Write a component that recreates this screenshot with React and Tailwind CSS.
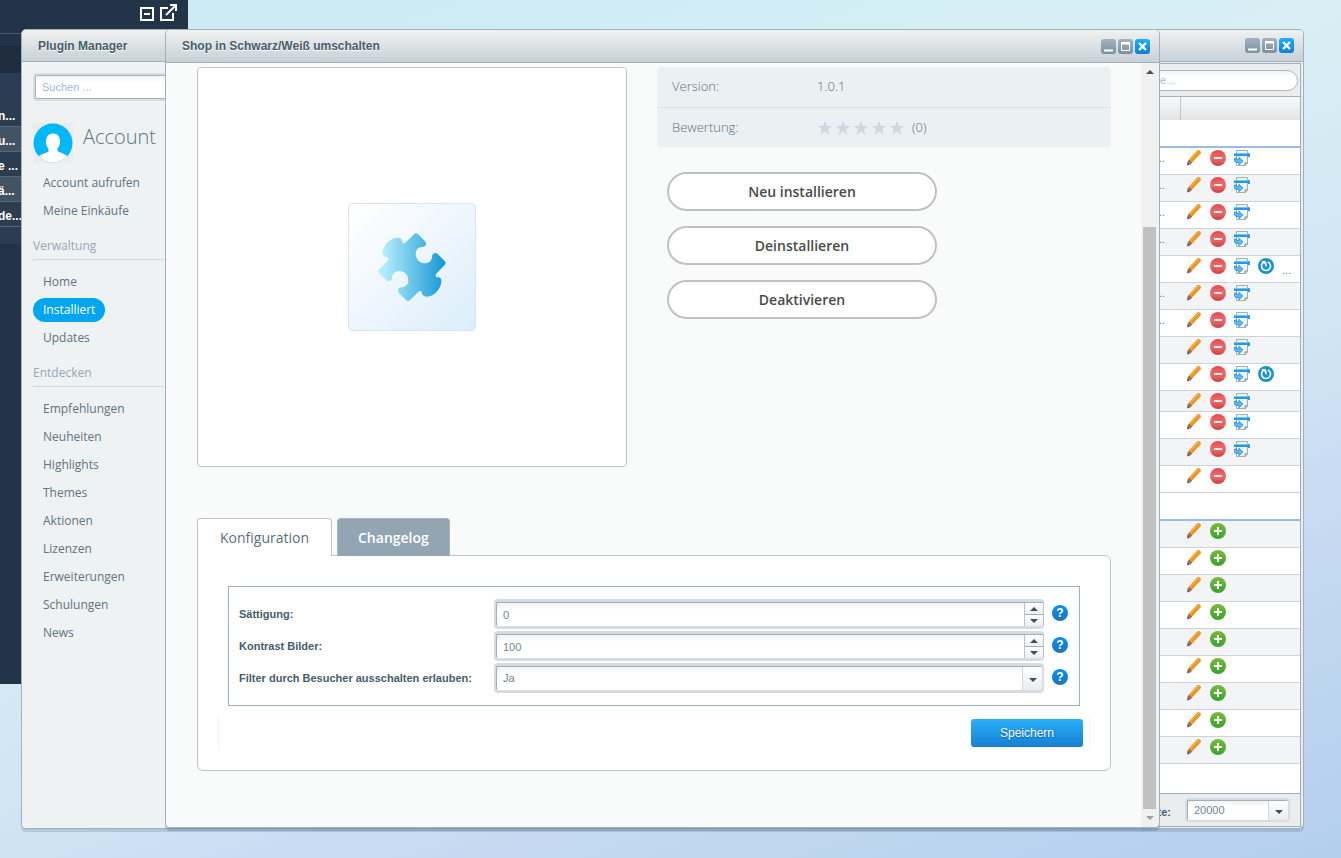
import { useState } from "react";
import clsx from "clsx";

const ACCOUNT_LINKS = ["Account aufrufen", "Meine Einkäufe"];
const MANAGE_LINKS = ["Home", "Installiert", "Updates"];
const DISCOVER_LINKS = [
  "Empfehlungen",
  "Neuheiten",
  "Highlights",
  "Themes",
  "Aktionen",
  "Lizenzen",
  "Erweiterungen",
  "Schulungen",
  "News",
];

const INSTALLED = [
  { dots: true, actions: ["edit", "remove", "reinstall"] },
  { dots: true, actions: ["edit", "remove", "reinstall"] },
  { dots: true, actions: ["edit", "remove", "reinstall"] },
  { dots: true, actions: ["edit", "remove", "reinstall"] },
  { actions: ["edit", "remove", "reinstall", "update"], more: true },
  { dots: true, actions: ["edit", "remove", "reinstall"] },
  { dots: true, actions: ["edit", "remove", "reinstall"] },
  { actions: ["edit", "remove", "reinstall"] },
  { actions: ["edit", "remove", "reinstall", "update"] },
  { actions: ["edit", "remove", "reinstall"], short: true },
  { actions: ["edit", "remove", "reinstall"] },
  { actions: ["edit", "remove", "reinstall"] },
  { actions: ["edit", "remove"] },
];

const AVAILABLE = Array.from({ length: 9 }, () => ({ actions: ["edit", "install"] }));

const TREE_ROWS = ["n...", "u...", "e ...", "ä...", "de..."];

/* ---------- icons ---------- */

function PencilIcon() {
  return (
    <svg width="16" height="16" viewBox="0 0 16 16">
      <path d="M1 15.6 1.6 11.4 4.8 14.2Z" fill="#6d5a55" />
      <path d="M1.6 11.4 3.2 9.4 6.2 12.2 4.8 14.2Z" fill="#a06a48" />
      <path d="M2.8 9.4 11.4.3Q12.6-.4 13.8.6T15 3L6.2 12.6Z" fill="#e8962a" />
      <path d="M4 9.5 12.500 1" stroke="#f3b04a" strokeWidth="1.200" />
    </svg>
  );
}

function RemoveIcon() {
  return (
    <svg width="16" height="16" viewBox="0 0 16 16">
      <defs>
        <linearGradient id="red" x1="0" y1="0" x2="0" y2="1">
          <stop offset="0" stopColor="#e5484b" />
          <stop offset=".5" stopColor="#ea6e70" />
          <stop offset="1" stopColor="#cf4040" />
        </linearGradient>
      </defs>
      <circle cx="8" cy="8" r="8" fill="url(#red)" />
      <rect x="4" y="7" width="8" height="2" fill="#fdeaea" />
    </svg>
  );
}

function InstallIcon() {
  return (
    <svg width="16" height="16" viewBox="0 0 16 16">
      <defs>
        <linearGradient id="green" x1="0" y1="0" x2="0" y2="1">
          <stop offset="0" stopColor="#7db93a" />
          <stop offset="1" stopColor="#35a42f" />
        </linearGradient>
      </defs>
      <circle cx="8" cy="8" r="8" fill="url(#green)" />
      <path d="M8 4v8M4 8h8" stroke="#fff" strokeWidth="2" />
    </svg>
  );
}

function ReinstallIcon() {
  return (
    <svg width="16" height="16" viewBox="0 0 16 16">
      <path d="M2.500.5h11v13l-2 2h-9Z" fill="#eef6f5" stroke="#9fb2b0" />
      <path d="M11 15.500v-2.500h2.500" fill="#fff" stroke="#6f8886" />
      <path d="M0 3h15l1 1v3h-2V6H0Z" fill="#2799ea" />
      <path d="M0 3.500h14" stroke="#6cc6fb" />
      <path
        d="M.5 8h2.200v1.600h2.200V7.200L9 11l-4.100 3.800v-2.400H2.500Q.5 12.400.5 10.500Z"
        fill="#62bdf5"
        stroke="#1a7fcd"
        strokeWidth=".7"
      />
    </svg>
  );
}

function UpdateIcon() {
  return (
    <svg width="16" height="16" viewBox="0 0 16 16">
      <circle cx="8" cy="8" r="8" fill="#1c93d1" />
      <path d="M10 4A4.500 4.500 0 1 1 5.200 4.500" fill="none" stroke="#fff" strokeWidth="1.600" />
      <path d="M3.500 3h4.200v4.200Z" fill="#fff" />
      <path d="M8 4.500v4" stroke="#fff" strokeWidth="1.400" />
    </svg>
  );
}

const ACTIONS = {
  edit: { label: "Bearbeiten", Icon: PencilIcon },
  remove: { label: "Deinstallieren", Icon: RemoveIcon },
  install: { label: "Installieren", Icon: InstallIcon },
  reinstall: { label: "Neu installieren", Icon: ReinstallIcon },
  update: { label: "Aktualisieren", Icon: UpdateIcon },
};

function PuzzleIcon() {
  return (
    <svg width="72" height="72" viewBox="138 122 216 216">
      <defs>
        <linearGradient id="puzzle" x1="0" y1="0" x2="1" y2="0">
          <stop offset="0.08" stopColor="#b4ecfd" />
          <stop offset="1" stopColor="#1397d3" />
        </linearGradient>
      </defs>
      <path
        fill="url(#puzzle)"
        d="M252 132Q258 126 264 132L285 153Q292 162 284 168Q280 170 275 170C263 171 257 180 257 191C258 207 269 219 284 219C297 219 306 210 306 199Q306 194 309 191Q316 185 323 191L344 212Q350 218 344 224L319 250Q314 257 320 261H325Q334 262 334 272C334 294 313 319 291 319Q276 319 275 306Q273 300 267 303L240 329Q234 335 228 329L207 308Q201 300 207 293Q211 291 217 291C229 290 235 281 235 270C235 254 223 242 208 242C195 242 186 251 186 262Q186 267 183 270Q176 276 169 270L148 249Q142 243 148 237L173 211Q178 204 172 200H167Q158 199 158 189C158 167 179 142 202 142Q216 142 217 155Q219 162 225 158Z"
      />
    </svg>
  );
}

function Avatar() {
  return (
    <svg width="40" height="40" viewBox="0 0 40 40" className="shrink-0 bg-[#e9edee]">
      <defs>
        <clipPath id="face">
          <circle cx="20" cy="20" r="19.500" />
        </clipPath>
      </defs>
      <g clipPath="url(#face)">
        <rect width="40" height="40" fill="#00b7fa" />
        <path
          fill="#fff"
          d="M20 10.500c5 0 7 3.500 7 8 0 3-1 5-2.500 7v2.500c1 1 8 2.500 11 6.500V40H4v-5c3-4 10.500-5.500 11.500-6.500V26C14 24 13 22 13 19c0-4.500 2-8.500 7-8.500Z"
        />
      </g>
    </svg>
  );
}

function Star() {
  return (
    <svg width="16" height="16" viewBox="0 0 16 16">
      <path fill="#cbd9e2" d="M8 .5 9.900 6H15.500L11 9.300 12.700 15 8 11.600 3.300 15 5 9.300.5 6H6.100Z" />
    </svg>
  );
}

function Triangle({ up, light }) {
  return (
    <svg width="8" height="4" viewBox="0 0 8 4" className={light ? "text-[#a0a0a0]" : "text-[#444c54]"}>
      <path d={up ? "M0 4 4 0 8 4Z" : "M0 0H8L4 4Z"} fill="currentColor" />
    </svg>
  );
}

/* ---------- window parts ---------- */

function WindowButtons() {
  const grey = "flex size-[15px] items-center justify-center rounded-[3px] bg-linear-to-b from-[#a3b3bf] to-[#7b909f]";
  return (
    <div className="flex gap-0.5">
      <button aria-label="Minimieren" className={grey}>
        <svg width="15" height="15" viewBox="0 0 15 15">
          <path d="M3 11.500h9" stroke="#fff" strokeWidth="2" />
        </svg>
      </button>
      <button aria-label="Maximieren" className={grey}>
        <svg width="15" height="15" viewBox="0 0 15 15">
          <path d="M3.500 3.500h8v8h-8Z" fill="none" stroke="#fff" />
          <path d="M3 4.500h9" stroke="#fff" strokeWidth="2" />
        </svg>
      </button>
      <button
        aria-label="Schließen"
        className="flex size-[15px] items-center justify-center rounded-[3px] bg-linear-to-b from-[#1fb0fb] to-[#0b7fd6]"
      >
        <svg width="15" height="15" viewBox="0 0 15 15">
          <path d="M4 4l7 7M11 4l-7 7" stroke="#fff" strokeWidth="2.400" />
        </svg>
      </button>
    </div>
  );
}

function WindowHeader({ title, tall }) {
  return (
    <header
      className={clsx(
        "flex shrink-0 items-center justify-between border-b border-[#a0b1be] bg-linear-to-b from-[#f0f1f1] to-[#c8d1d7] pr-[9px] pl-4",
        tall ? "h-[33px]" : "h-8"
      )}
    >
      <h2 className="text-xs font-bold text-[#475c6a] [text-shadow:0_1px_0_#fff]">{title}</h2>
      <WindowButtons />
    </header>
  );
}

function NavLinks({ items, active }) {
  return (
    <ul className="flex flex-col items-start gap-1">
      {items.map((item) => (
        <li key={item} className="flex">
          <a
            href="#"
            className={clsx(
              "rounded-full px-2.5 text-xs leading-6",
              item === active ? "bg-[#00a5f2] font-medium text-white" : "text-[#61747f]"
            )}
          >
            {item}
          </a>
        </li>
      ))}
    </ul>
  );
}

function Sidebar() {
  return (
    <aside className="w-[210px] shrink-0 bg-[#eef2f3] px-[11px] pt-[11px] font-['Open_Sans',sans-serif]">
      <div className="rounded-sm bg-[#d8dde2] p-0.5">
        <input
          type="search"
          aria-label="Suchen"
          placeholder="Suchen ..."
          className="block h-6 w-full rounded-xs border border-[#a5b1bb] bg-linear-to-b from-[#f1f2f3] via-white via-30% to-white px-1.5 font-['Liberation_Sans',Arial,sans-serif] text-[11px] outline-none placeholder:text-[#a3b9c6]"
        />
      </div>
      <div className="mt-[22px] mb-2 flex gap-2.5">
        <Avatar />
        <h3 className="text-xl leading-7 font-light text-[#61747f]">Account</h3>
      </div>
      <NavLinks items={ACCOUNT_LINKS} />
      <h4 className="mt-[13px] mb-2.5 border-b border-[#d2dae0] pb-[3px] text-xs leading-5 text-[#97a7b3]">Verwaltung</h4>
      <NavLinks items={MANAGE_LINKS} active="Installiert" />
      <h4 className="mt-[13px] mb-2.5 border-b border-[#d2dae0] pb-[3px] text-xs leading-5 text-[#97a7b3]">Entdecken</h4>
      <NavLinks items={DISCOVER_LINKS} />
    </aside>
  );
}

function PluginRow({ row, grey }) {
  const cell = clsx(
    "border-b border-[#cbd4dc] pt-0.5 align-top",
    row.short ? "h-[21px]" : "h-[27px]",
    grey ? "bg-[#f3f4f6]" : "bg-white"
  );
  return (
    <tr>
      <td className={clsx(cell, "pr-[15px] text-right leading-4 text-[#4b86bb]")}>{row.dots && "..."}</td>
      <td className={clsx(cell, "pl-1.5")}>
        <div className="flex h-4 gap-2">
          {row.actions.map((name) => {
            const { label, Icon } = ACTIONS[name];
            return (
              <button key={name} aria-label={label} className="size-4">
                <Icon />
              </button>
            );
          })}
          {row.more && <span className="pt-1 text-[#61747f]">...</span>}
        </div>
      </td>
    </tr>
  );
}

function GroupRow() {
  return (
    <tr>
      <td colSpan={2} className="h-7 border-b-2 border-[#99bbe8] bg-white" />
    </tr>
  );
}

function PluginGrid() {
  return (
    <section className="mt-px mr-0.5 mb-px flex min-w-0 flex-1 flex-col border border-[#a0b1be] bg-[#ebecee]">
      <div className="flex h-8 shrink-0 items-center justify-end pr-0.5">
        <input
          type="search"
          aria-label="Plugins durchsuchen"
          placeholder="Suche..."
          className="h-[21px] w-[180px] rounded-full border border-[#a9b8c4] bg-linear-to-b from-[#f1f2f3] via-white via-30% to-white pr-2 pl-4 outline-none placeholder:text-[#a3b9c6]"
        />
      </div>
      <div className="flex-1 overflow-hidden border-y border-[#a0b1be] bg-white">
        <table className="w-full table-fixed border-separate border-spacing-0">
          <thead>
            <tr className="h-[23px] bg-linear-to-b from-[#f9f9f9] to-[#e3e4e6]">
              <th aria-label="Name" />
              <th aria-label="Aktionen" className="w-[120px] border-l border-[#bdc7cf]" />
            </tr>
          </thead>
          <tbody>
            <GroupRow />
            {INSTALLED.map((row, i) => (
              <PluginRow key={i} row={row} grey={i % 2 === 1} />
            ))}
            <GroupRow />
            {AVAILABLE.map((row, i) => (
              <PluginRow key={i} row={row} grey={i % 2 === 0} />
            ))}
          </tbody>
        </table>
      </div>
      <footer className="flex h-8 shrink-0 items-center justify-end gap-3.5 pr-2.5">
        <label htmlFor="page-size" className="pt-1 font-bold text-[#475c6a]">
          Plugins pro Seite:
        </label>
        <div className="w-[105px]">
          <Combo id="page-size" options={["20000"]} small />
        </div>
      </footer>
    </section>
  );
}

/* ---------- form fields ---------- */

function Combo({ id, options, small }) {
  return (
    <div className={clsx("rounded-sm bg-[#d6dce1] px-0.5", small ? "py-0.5" : "py-[3px]")}>
      <div
        className={clsx(
          "grid grid-cols-[1fr_20px] rounded-xs border-t border-l border-[#a0afba] bg-linear-to-b from-[#f1f2f3] via-white via-30% to-white",
          small ? "h-5" : "h-6"
        )}
      >
        <select
          id={id}
          className="col-span-2 col-start-1 row-start-1 appearance-none bg-transparent px-1.5 text-[#6d8497] outline-none"
        >
          {options.map((option) => (
            <option key={option}>{option}</option>
          ))}
        </select>
        <span className="pointer-events-none col-start-2 row-start-1 flex items-center justify-center border-l border-[#cfd6dc] bg-linear-to-b from-white to-[#e9ebed] pt-0.5">
          <Triangle />
        </span>
      </div>
    </div>
  );
}

function Spinner({ id, initial }) {
  const [value, setValue] = useState(initial);
  const button = "flex flex-1 items-center justify-center bg-linear-to-b from-white to-[#eceef0]";
  return (
    <div className="rounded-sm bg-[#d6dce1] py-[3px] pl-0.5">
      <div className="flex h-6 rounded-xs border-t border-l border-[#a0afba] bg-linear-to-b from-[#f1f2f3] via-white via-30% to-white">
        <input
          id={id}
          type="text"
          inputMode="numeric"
          value={value}
          onChange={(e) => setValue(Number(e.target.value) || 0)}
          className="min-w-0 flex-1 bg-transparent px-1.5 pt-0.5 text-[#6d8497] outline-none"
        />
        <div className="flex w-5 flex-col border-x border-[#b9c3cb]">
          <button type="button" aria-label="Erhöhen" onClick={() => setValue(value + 1)} className={button}>
            <Triangle up />
          </button>
          <button
            type="button"
            aria-label="Verringern"
            onClick={() => setValue(value - 1)}
            className={clsx(button, "border-t border-[#a0afba]")}
          >
            <Triangle />
          </button>
        </div>
      </div>
    </div>
  );
}

function Field({ id, label, children }) {
  return (
    <div className="flex items-center">
      <label htmlFor={id} className="w-[255px] shrink-0 font-bold text-[#475c6a]">
        {label}
      </label>
      <div className="mr-2 min-w-0 flex-1">{children}</div>
      <button
        type="button"
        aria-label={`Hilfe zu ${label}`}
        className="mb-0.5 size-4 rounded-full bg-linear-to-b from-[#0b8ff0] to-[#1a74bd] text-xs leading-4 font-bold text-white"
      >
        ?
      </button>
    </div>
  );
}

function ConfigForm() {
  return (
    <form
      onSubmit={(e) => e.preventDefault()}
      className="rounded-md rounded-tl-none border border-[#c0c4c5] bg-white px-[30px] pt-[30px] pb-5"
    >
      <div className="flex flex-col gap-0.5 border border-[#a0b1be] py-3 pr-[11px] pl-2.5">
        <Field id="saturation" label="Sättigung:">
          <Spinner id="saturation" initial={0} />
        </Field>
        <Field id="contrast" label="Kontrast Bilder:">
          <Spinner id="contrast" initial={100} />
        </Field>
        <Field id="filter-off" label="Filter durch Besucher ausschalten erlauben:">
          <Combo id="filter-off" options={["Ja", "Nein"]} />
        </Field>
      </div>
      <div className="-mx-2.5 mt-2.5 flex justify-end border-x border-[#f3f4f5] py-[3px] pr-1.5">
        <button
          type="submit"
          className="h-7 w-28 rounded-[3px] bg-linear-to-b from-[#2bb0f8] to-[#177fd4] text-xs text-white [text-shadow:0_1px_1px_#0b5fa5]"
        >
          Speichern
        </button>
      </div>
    </form>
  );
}

function DetailContent() {
  const pill =
    "h-[39px] rounded-full border-2 border-[#c1c1c1] bg-white text-sm font-semibold text-[#4a4a4a]";
  return (
    <div className="min-w-0 flex-1 overflow-hidden bg-[#f9fbfa] pt-1 pr-[30px] pl-[31px]">
      <div className="flex gap-[30px] font-['Open_Sans',sans-serif]">
        <div className="flex h-[400px] w-[430px] shrink-0 items-center justify-center rounded-sm border border-[#c0c4c5] bg-white">
          <div className="flex size-32 items-center justify-center rounded-sm border border-[#d6e5ee] bg-linear-to-br from-white via-[#eef6fd] to-[#d9eefa]">
            <PuzzleIcon />
          </div>
        </div>
        <div className="min-w-0 flex-1">
          <dl className="grid grid-cols-[145px_1fr] grid-rows-[41px_39px] overflow-hidden rounded-sm bg-[#ebf0f3] text-[13px] leading-[39px] font-light text-[#5b6f80]">
            <dt className="border-b border-[#dbe2e7] pl-[15px]">Version:</dt>
            <dd className="border-b border-[#dbe2e7] pl-[15px]">1.0.1</dd>
            <dt className="pl-[15px]">Bewertung:</dt>
            <dd className="flex items-center gap-0.5 pl-[15px]">
              <Star />
              <Star />
              <Star />
              <Star />
              <Star />
              <span className="pl-[5px]">(0)</span>
            </dd>
          </dl>
          <div className="mt-[25px] ml-2.5 flex w-[270px] flex-col gap-[15px]">
            <button className={pill}>Neu installieren</button>
            <button className={pill}>Deinstallieren</button>
            <button className={pill}>Deaktivieren</button>
          </div>
        </div>
      </div>
      <div className="mt-[51px]">
        <div role="tablist" className="relative -mb-px flex gap-[5px] font-['Open_Sans',sans-serif] text-sm">
          <button
            role="tab"
            aria-selected="true"
            className="h-[38px] w-[135px] rounded-t-sm border border-b-0 border-[#c0c4c5] bg-white font-medium text-[#5b6f80]"
          >
            Konfiguration
          </button>
          <button
            role="tab"
            aria-selected="false"
            className="h-[38px] rounded-t-sm border border-b-0 border-[#a9b5be] bg-[#93a5b3] px-5 font-semibold text-white"
          >
            Changelog
          </button>
        </div>
        <ConfigForm />
      </div>
    </div>
  );
}

function ScrollBar() {
  return (
    <div className="mr-px flex w-[17px] shrink-0 flex-col items-center bg-[#f1f1f1]">
      <span className="flex h-[18px] items-center">
        <Triangle up />
      </span>
      <div className="flex flex-1 flex-col justify-end">
        <div className="h-4/5 w-[13px] bg-[#c1c1c1]" />
      </div>
      <span className="flex h-[18px] items-center">
        <Triangle light />
      </span>
    </div>
  );
}

function BackendTree() {
  return (
    <div className="absolute top-0 left-0 h-[684px] w-[188px] overflow-hidden bg-[#233348] text-xs font-bold text-white">
      <div className="flex h-[34px] justify-end gap-1 border-b border-[#4a5b6b] pt-1 pr-[11px]">
        <button aria-label="Einklappen" className="size-[18px]">
          <svg width="18" height="18" viewBox="0 0 18 18" fill="none" stroke="#fff" strokeWidth="2">
            <path d="M4 4h12v12H4ZM7 10h6" />
          </svg>
        </button>
        <button aria-label="In neuem Fenster öffnen" className="size-[18px]">
          <svg width="18" height="18" viewBox="0 0 18 18" fill="none" stroke="#fff" strokeWidth="2">
            <path d="M9 4H2v12h12V9M7 11 16 2M11 1h6v6" />
          </svg>
        </button>
      </div>
      <div className="h-3" />
      <div className="h-[27px] bg-[#1e2c3e]" />
      <ul className="bg-[#2c3d53] pt-[29px] pb-[17px]">
        {TREE_ROWS.map((text, i) => (
          <li
            key={text}
            className={clsx(
              "-ml-0.5 h-[25px] border-b border-[#56697a] leading-7 whitespace-nowrap",
              i % 2 === 1 ? "bg-[#435364]" : "bg-[#2c3d50]"
            )}
          >
            {text}
          </li>
        ))}
      </ul>
    </div>
  );
}

export default function App() {
  return (
    <div className="relative h-screen overflow-hidden bg-[linear-gradient(160deg,#c9eaf5_0%,#d8eff5_37%,#d0e6f3_60%,#c8dcf2_72%,#b4ceee_100%)] font-['Liberation_Sans',Arial,sans-serif] text-[11px]">
      <BackendTree />

      <div className="absolute top-[29px] right-[37px] bottom-[29px] left-[21px] flex flex-col overflow-hidden rounded-[5px] border border-[#a0b1be] bg-[#ebecee] shadow-[0_3px_0_rgba(90,120,145,0.25)]">
        <WindowHeader title="Plugin Manager" />
        <div className="flex min-h-0 flex-1">
          <Sidebar />
          <PluginGrid />
        </div>
      </div>

      <div className="absolute top-[29px] right-[181px] bottom-[30px] left-[165px] flex flex-col overflow-hidden rounded-[5px] border border-[#a0b1be] bg-[#f1f1f1] shadow-[0_3px_0_rgba(90,120,145,0.35)]">
        <WindowHeader title="Shop in Schwarz/Weiß umschalten" tall />
        <div className="flex min-h-0 flex-1">
          <DetailContent />
          <ScrollBar />
        </div>
      </div>
    </div>
  );
}
